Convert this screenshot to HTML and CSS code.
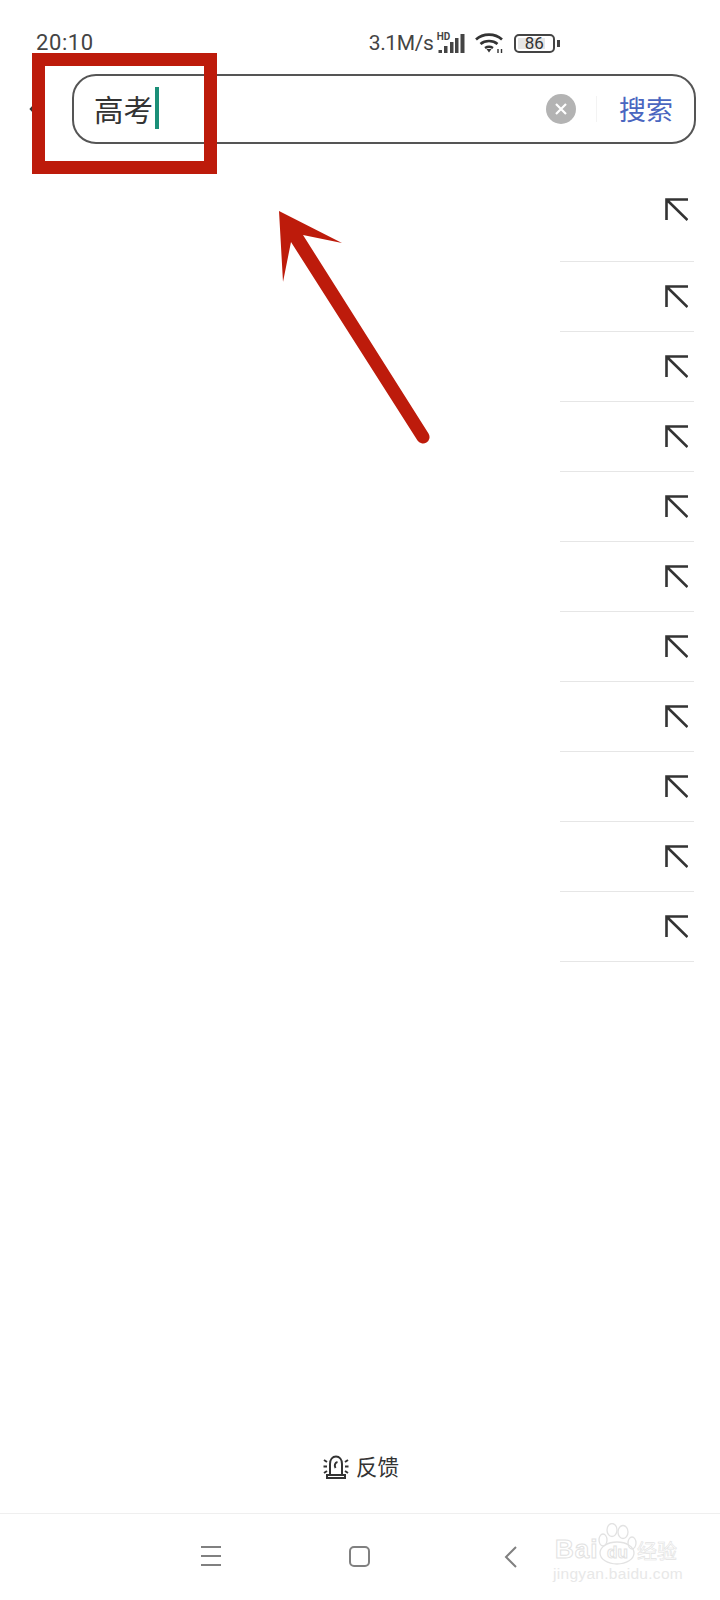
FILE: index.html
```html
<!DOCTYPE html>
<html>

<head>
    <meta charset="UTF-8">
    <title>Search</title>
    <link rel="stylesheet" href="styles.css">
</head>

<body>
    <div class="phone">
        <!-- Status bar -->
        <div class="status-bar">
            <span class="clock">20:10</span>
            <div class="status-right">
                <span class="speed">3.1M/s</span>
                <div class="signal">
                    <span class="hd">HD</span>
                    <svg class="signal-bars" width="27" height="20" viewBox="0 0 27 20">
                        <rect x="0.500" y="16" width="3.500" height="3" fill="#444" />
                        <rect x="6" y="12" width="3.500" height="7" fill="#444" />
                        <rect x="12" y="8" width="3.500" height="11" fill="#444" />
                        <rect x="17" y="4" width="3.500" height="15" fill="#444" />
                        <rect x="22.500" y="0" width="4" height="19" fill="#444" />
                    </svg>
                </div>
                <svg class="wifi" width="29" height="22" viewBox="0 0 29 22" fill="none" stroke="#333" stroke-width="2.600">
                    <path d="M1 7.500C8 1 20 1 27 7.500" />
                    <path d="M5.500 12C10 8 18 8 22.500 12" />
                    <path d="M10 16C12.500 14.500 15.500 14.500 18 16" />
                    <path d="M11.500 17L14 20.500L16.500 17Z" fill="#333" stroke="none" />
                    <path d="M23 17V21M26.500 17V21" stroke-width="1.400" />
                </svg>
                <div class="battery">
                    <div class="battery-body">
                        <span class="battery-fill"></span>
                        <span class="battery-text">86</span>
                    </div>
                    <span class="battery-nub"></span>
                </div>
            </div>
        </div>

        <!-- Search header -->
        <div class="search-row">
            <svg class="back" width="14" height="24" viewBox="0 0 14 24" fill="none" stroke="#333" stroke-width="2.400">
                <path d="M12 1L2 12L12 23" />
            </svg>
            <div class="search-box">
                <span class="query">高考</span>
                <span class="caret"></span>
                <span class="clear">
                    <svg width="14" height="14" viewBox="0 0 14 14" stroke="#fff" stroke-width="2.200">
                        <path d="M2 2L12 12M12 2L2 12" />
                    </svg>
                </span>
                <span class="search-sep"></span>
                <span class="search-btn">搜索</span>
            </div>
        </div>

        <!-- Suggestion rows -->
        <div class="list">
            <div class="row"><svg class="fill-icon" width="23" height="23" viewBox="0 0 23 23"><path d="M1.500 22V1.500H23M1.500 1.500L22.500 22" /></svg></div>
            <div class="row"><svg class="fill-icon" width="23" height="23" viewBox="0 0 23 23"><path d="M1.500 22V1.500H23M1.500 1.500L22.500 22" /></svg></div>
            <div class="row"><svg class="fill-icon" width="23" height="23" viewBox="0 0 23 23"><path d="M1.500 22V1.500H23M1.500 1.500L22.500 22" /></svg></div>
            <div class="row"><svg class="fill-icon" width="23" height="23" viewBox="0 0 23 23"><path d="M1.500 22V1.500H23M1.500 1.500L22.500 22" /></svg></div>
            <div class="row"><svg class="fill-icon" width="23" height="23" viewBox="0 0 23 23"><path d="M1.500 22V1.500H23M1.500 1.500L22.500 22" /></svg></div>
            <div class="row"><svg class="fill-icon" width="23" height="23" viewBox="0 0 23 23"><path d="M1.500 22V1.500H23M1.500 1.500L22.500 22" /></svg></div>
            <div class="row"><svg class="fill-icon" width="23" height="23" viewBox="0 0 23 23"><path d="M1.500 22V1.500H23M1.500 1.500L22.500 22" /></svg></div>
            <div class="row"><svg class="fill-icon" width="23" height="23" viewBox="0 0 23 23"><path d="M1.500 22V1.500H23M1.500 1.500L22.500 22" /></svg></div>
            <div class="row"><svg class="fill-icon" width="23" height="23" viewBox="0 0 23 23"><path d="M1.500 22V1.500H23M1.500 1.500L22.500 22" /></svg></div>
            <div class="row"><svg class="fill-icon" width="23" height="23" viewBox="0 0 23 23"><path d="M1.500 22V1.500H23M1.500 1.500L22.500 22" /></svg></div>
            <div class="row"><svg class="fill-icon" width="23" height="23" viewBox="0 0 23 23"><path d="M1.500 22V1.500H23M1.500 1.500L22.500 22" /></svg></div>
        </div>

        <!-- Feedback link -->
        <div class="feedback">
            <svg class="feedback-icon" width="26" height="24" viewBox="0 0 26 24" fill="none" stroke="#333" stroke-width="2">
                <path d="M7 20V9C7 4.500 9.500 1.500 13 1.500C16.500 1.500 19 4.500 19 9V20" />
                <path d="M4 20H22V23H4Z" />
                <path d="M14.500 7C12 7.500 11 10.500 12.500 13" />
                <path d="M1 5L4 7M0.500 11.500H4M1 18L4 16M25 5L22 7M25.500 11.500H22M25 18L22 16" />
            </svg>
            <span class="feedback-text">反馈</span>
        </div>

        <!-- System navigation -->
        <div class="nav-bar">
            <div class="nav-menu"><span></span><span></span><span></span></div>
            <div class="nav-home"></div>
            <svg class="nav-back" width="13" height="22" viewBox="0 0 13 22" fill="none" stroke="#808080" stroke-width="2">
                <path d="M12 1L2 11L12 21" />
            </svg>
        </div>

        <!-- Annotations drawn over the screenshot -->
        <div class="red-box"></div>
        <svg class="red-arrow" width="720" height="1600" viewBox="0 0 720 1600">
            <path d="M279 211L342 243L303 235L428.500 433.500A6.500 6.500 0 0 1 417.500 440.500L291 242L283 282Z" fill="#bd1b0b" />
        </svg>

        <!-- Watermark -->
        <div class="watermark">
            <svg class="paw" width="44" height="44" viewBox="0 0 44 44" fill="none" stroke="#e2e2e2" stroke-width="1.300">
                <ellipse cx="17" cy="7" rx="5" ry="6.500" />
                <ellipse cx="28" cy="9" rx="5" ry="6.500" />
                <ellipse cx="8" cy="17" rx="4" ry="6" />
                <ellipse cx="37" cy="20" rx="4" ry="6" />
                <ellipse cx="22" cy="30" rx="17" ry="11" />
            </svg>
            <span class="wm-bai">Bai</span>
            <span class="wm-du">du</span>
            <span class="wm-cn">经验</span>
            <div class="wm-url">jingyan.baidu.com</div>
        </div>
    </div>
</body>

</html>
```

FILE: styles.css
```css
body {
    margin: 0;
    background-color: #fff;
    font-family: "Roboto", "Noto Sans CJK SC", sans-serif;
}

.phone {
    position: relative;
    width: 720px;
    height: 1600px;
    display: flex;
    flex-direction: column;
    overflow: hidden;
    background-color: #fff;
}

/* Status bar */
.status-bar {
    height: 74px;
    box-sizing: border-box;
    padding: 31px 0 0 36px;
    display: flex;
    align-items: flex-start;
    color: #444;
}

.clock {
    font-size: 22px;
    line-height: 24px;
    letter-spacing: 0.6px;
}

.status-right {
    margin-left: 275px;
    display: flex;
    align-items: center;
    height: 24px;
}

.speed {
    font-size: 21px;
    line-height: 24px;
    letter-spacing: -0.4px;
    width: 69px;
}

.signal {
    position: relative;
    width: 27px;
    height: 22px;
}

.hd {
    position: absolute;
    left: -1px;
    top: 0;
    font-size: 10px;
    line-height: 10px;
    font-weight: 700;
}

.signal-bars {
    display: block;
    margin-top: 2px;
}

.wifi {
    margin-left: 10px;
}

.battery {
    margin-left: 10px;
    display: flex;
    align-items: center;
}

.battery-body {
    position: relative;
    width: 41px;
    height: 19px;
    box-sizing: border-box;
    border: 2px solid #444;
    border-radius: 5px;
}

.battery-fill {
    position: absolute;
    left: 2px;
    top: 2px;
    bottom: 2px;
    width: 27px;
    background-color: #e6e6e6;
}

.battery-text {
    position: absolute;
    left: 0;
    right: 0;
    top: 0;
    text-align: center;
    font-size: 17px;
    line-height: 15px;
    color: #333;
}

.battery-nub {
    width: 3px;
    height: 7px;
    margin-left: 2px;
    background-color: #444;
}

/* Search header */
.search-row {
    height: 70px;
    display: flex;
    align-items: center;
    padding-left: 29px;
    padding-right: 24px;
}

.back {
    flex-shrink: 0;
    margin-right: 29px;
}

.search-box {
    flex: 1;
    height: 70px;
    box-sizing: border-box;
    border: 2px solid #555;
    border-radius: 24px;
    display: flex;
    align-items: center;
    padding-left: 20px;
}

.query {
    font-size: 29.500px;
    line-height: 42px;
    color: #333;
    padding-top: 3px;
}

.caret {
    width: 4px;
    height: 42px;
    margin-left: 2px;
    margin-bottom: 3px;
    background-color: #1a8f78;
}

.clear {
    margin-left: auto;
    width: 30px;
    height: 30px;
    border-radius: 50%;
    background-color: #b3b3b3;
    display: flex;
    align-items: center;
    justify-content: center;
}

.search-sep {
    width: 1px;
    height: 26px;
    margin: 0 22px 0 20px;
    background-color: #f3f3f3;
}

.search-btn {
    font-size: 27px;
    line-height: 36px;
    color: #4a66c0;
    margin-right: 21px;
    padding-top: 3px;
}

/* Suggestion rows */
.list {
    flex: 1;
    padding-top: 13px;
}

.row {
    height: 70px;
    box-sizing: border-box;
    margin-left: 560px;
    margin-right: 26px;
    padding-right: 6px;
    border-bottom: 1px solid #e6e6e6;
    display: flex;
    align-items: center;
    justify-content: flex-end;
}

.row:first-child {
    height: 105px;
}

.fill-icon {
    fill: none;
    stroke: #333;
    stroke-width: 2.600;
}

/* Feedback link */
.feedback {
    height: 90px;
    box-sizing: border-box;
    padding-left: 2px;
    display: flex;
    align-items: center;
    justify-content: center;
    gap: 7px;
}

.feedback-icon {
    margin-top: -2px;
}

.feedback-text {
    font-size: 21.500px;
    line-height: 30px;
    color: #333;
}

/* System navigation */
.nav-bar {
    height: 87px;
    box-sizing: border-box;
    border-top: 1px solid #efefef;
    padding-left: 201px;
    padding-top: 32px;
    display: flex;
    align-items: flex-start;
    gap: 128px;
}

.nav-menu {
    width: 20px;
    height: 20px;
    display: flex;
    flex-direction: column;
    justify-content: space-between;
}

.nav-menu span {
    height: 2px;
    background-color: #808080;
}

.nav-home {
    width: 21px;
    height: 21px;
    box-sizing: border-box;
    border: 2px solid #808080;
    border-radius: 5px;
}

.nav-back {
    margin-left: 6px;
}

/* Annotations */
.red-box {
    position: absolute;
    left: 32px;
    top: 53px;
    width: 185px;
    height: 121px;
    box-sizing: border-box;
    border: 13px solid #bd1b0b;
}

.red-arrow {
    position: absolute;
    left: 0;
    top: 0;
}

/* Watermark */
.watermark {
    position: absolute;
    left: 553px;
    top: 1523px;
    width: 130px;
    height: 64px;
}

.paw {
    position: absolute;
    left: 42px;
    top: 0;
}

.wm-bai {
    position: absolute;
    left: 2px;
    top: 13px;
    font-family: "Liberation Sans", sans-serif;
    font-size: 26px;
    line-height: 26px;
    font-weight: 700;
    letter-spacing: 1px;
    color: #fff;
    -webkit-text-stroke: 1px #e2e2e2;
}

.wm-du {
    position: absolute;
    left: 54px;
    top: 20px;
    font-family: "Liberation Sans", sans-serif;
    font-size: 17px;
    line-height: 20px;
    font-weight: 700;
    color: #fff;
    -webkit-text-stroke: 1px #e2e2e2;
}

.wm-cn {
    position: absolute;
    left: 84px;
    top: 17px;
    font-size: 20px;
    line-height: 24px;
    color: #fff;
    -webkit-text-stroke: 0.6px #e2e2e2;
}

.wm-url {
    position: absolute;
    left: 0;
    top: 42px;
    font-family: "Liberation Sans", sans-serif;
    font-size: 15.500px;
    line-height: 18px;
    letter-spacing: 0.3px;
    color: #e8e8e8;
    white-space: nowrap;
}
```
